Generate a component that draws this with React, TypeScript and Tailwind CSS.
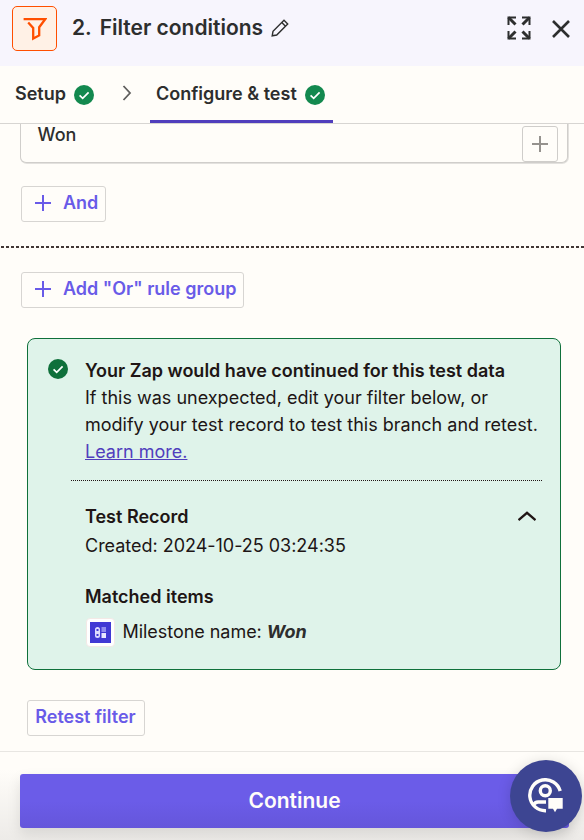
import React, { useState } from "react";

const TABS = [
  { id: "setup", label: "Setup" },
  { id: "configure", label: "Configure & test" },
];

function CheckBadge({ className }: { className: string }) {
  return (
    <svg viewBox="0 0 20 20" className={`w-5 h-5 shrink-0 ${className}`}>
      <circle cx="10" cy="10" r="10" fill="currentColor" />
      <path d="M5.6 10.3 8.7 13.4 14.6 7.3" fill="none" stroke="#fff" strokeWidth="1.7" />
    </svg>
  );
}

function PlusIcon({ className = "" }: { className?: string }) {
  return (
    <svg viewBox="0 0 16 16" className={`w-4 h-4 shrink-0 ${className}`} stroke="currentColor" strokeWidth="2">
      <path d="M8 0v16M0 8h16" />
    </svg>
  );
}

function FilterLogo() {
  return (
    <div className="flex items-center justify-center w-[45px] h-[45px] rounded-[5px] border border-[#ff4f00] bg-[#fff1e6]">
      <svg viewBox="0 0 24 24" className="w-6 h-6" fill="none" stroke="#ff4f00" strokeWidth="2.3">
        <path d="M.6 2.200H22.200L16.200 10.200v8.200L10.200 21.600V11L5.200 5.400" />
      </svg>
    </div>
  );
}

function ExpandIcon() {
  return (
    <svg viewBox="0 0 24 24" className="w-6 h-6" fill="none" stroke="#2d2e2e" strokeWidth="2">
      <path d="M1.500 9V1.500H9M15 1.500h7.500V9M22.500 15v7.500H15M9 22.500H1.500V15" />
      <path d="m1.500 1.500 7 7M22.500 1.500l-7 7M22.500 22.500l-7-7M1.500 22.500l7-7" strokeWidth="3" />
    </svg>
  );
}

export default function App() {
  const [open, setOpen] = useState(true);

  return (
    <div className="relative flex flex-col w-[584px] h-[840px] overflow-hidden bg-[#fffdf9] font-['Inter',sans-serif] text-[18px] leading-[27px] text-[#2d2e2e] whitespace-nowrap">
      {/* Header */}
      <header className="flex items-start h-[66px] shrink-0 bg-[#f7f5fd] pl-3 pt-1.5">
        <FilterLogo />
        <h1 className="ml-[15px] mt-[6px] text-[21px] leading-8 font-semibold">
          2. <span className="ml-[3px]">Filter conditions</span>
        </h1>
        <svg viewBox="0 0 18 18" className="w-[18px] h-[18px] ml-2 mt-[13px]" fill="none" stroke="#2d2e2e" strokeWidth="1.4">
          <path d="M1.200 16.800 2 12.300 13 1.300l3.700 3.700-11 11zM10.800 3.500l3.700 3.700" />
        </svg>
        <button className="ml-auto mt-[10px]">
          <ExpandIcon />
        </button>
        <button className="ml-[21px] mr-[14px] mt-[14px]">
          <svg viewBox="0 0 18 18" className="w-[18px] h-[18px]" stroke="#2d2e2e" strokeWidth="2.6">
            <path d="m1 1 16 16M17 1 1 17" />
          </svg>
        </button>
      </header>

      {/* Step tabs */}
      <nav className="flex h-[58px] shrink-0 border-b border-[#d7d5d2] pl-[15px] font-semibold">
        <button className="flex items-center gap-2 h-[57px]">
          <span className="pb-0.5">{TABS[0].label}</span>
          <CheckBadge className="text-[#13894f]" />
        </button>
        <svg viewBox="0 0 10 16" className="w-[10px] h-4 ml-7 mt-[19px]" fill="none" stroke="#5f5e5d" strokeWidth="1.8">
          <path d="m1.500 1 6.500 7-6.500 7" />
        </svg>
        <button className="flex items-center gap-2 h-[57px] w-[183px] ml-[18px] pl-1.5 border-b-[3px] border-[#503ebd]">
          <span>{TABS[1].label}</span>
          <CheckBadge className="mt-[3px] text-[#13894f]" />
        </button>
      </nav>

      {/* Filter rules */}
      <section className="flex flex-col items-start shrink-0">
        <div className="w-[549px] h-10 ml-[19.5px] pb-px pl-px pr-px bg-[#e3e1de] rounded-b-[7px]">
          <div className="flex justify-between h-[39px] -ml-px pl-[17px] pr-[9px] border border-t-0 border-[#d0cecb] rounded-b-md bg-[#fffdf9] font-medium">
            <span className="-mt-[3px]">Won</span>
            <button className="flex items-center justify-center w-9 h-9 mt-0.5 border border-[#cfcdca] rounded-[3px] text-[#95928e]">
              <PlusIcon />
            </button>
          </div>
        </div>
        <button className="flex items-center gap-3 h-9 w-[85px] ml-[21px] mt-[22px] pl-[13px] pb-px border border-[#d7d5d2] rounded-[3px] font-semibold text-[#695be8]">
          <PlusIcon className="-mt-px" />
          <span className="pb-0.5">And</span>
        </button>
        <div className="w-full h-0.5 mt-6 bg-[repeating-linear-gradient(90deg,transparent_0_1px,#413735_1px_4px,transparent_4px_5px)]" />
        <button className="flex items-center gap-3 h-9 w-[223px] ml-[21px] mt-6 pl-[13px] pb-px border border-[#d7d5d2] rounded-[3px] font-semibold text-[#695be8]">
          <PlusIcon className="-mt-px" />
          <span className="pb-0.5">Add "Or" rule group</span>
        </button>
      </section>

      {/* Test result */}
      <section className="flex shrink-0 w-[534px] h-[332px] ml-[27px] mt-[30px] pl-5 pt-[18px] border border-[#0f703b] rounded-lg bg-[#dff3ea] text-[#201515]">
        <CheckBadge className="mt-0.5 text-[#0f703b]" />
        <div className="flex flex-col ml-[3px] w-[471px]">
          <div className="pl-3.5">
            <p className="font-semibold">Your Zap would have continued for this test data</p>
            <p>If this was unexpected, edit your filter below, or</p>
            <p>modify your test record to test this branch and retest.</p>
            <a className="text-[#503ebd] underline">Learn more.</a>
          </div>
          <div className="h-px mt-[15px] bg-[repeating-linear-gradient(90deg,#201515_0_1px,transparent_1px_2px)]" />
          <button className="flex justify-between pl-3.5 pr-1.5 mt-[22px] font-semibold" onClick={() => setOpen(!open)}>
            Test Record
            <svg viewBox="0 0 18 10" className="w-[18px] h-[10px] mt-2" fill="none" stroke="#201515" strokeWidth="2.3">
              <path d="M.500 9 9 1.800 17.500 9" />
            </svg>
          </button>
          {open && (
            <div className="pl-3.5">
              <p className="mt-0.5 tracking-[-0.02px]">Created: 2024-10-25 03:24:35</p>
              <p className="mt-6 font-semibold">Matched items</p>
              <div className="flex items-center mt-2">
                <div className="flex items-center justify-center w-[29px] h-[29px] ml-[0.5px] rounded-[4px] border border-[#f3e9e6] bg-white">
                  <svg viewBox="0 0 21 21" className="w-[21px] h-[21px] shrink-0">
                    <path fill="#4039d4" d="M0 0h21v21H0z" />
                    <rect x="5" y="5" width="5" height="11" rx="2.5" fill="#dddcff" />
                    <path fill="#4039d4" d="M6.500 7h2v2h-2zM6.500 12h2v2h-2z" />
                    <path fill="#918dee" d="M11.500 5h4.500v5h-4.500z" />
                    <path fill="#e8e7ff" d="M11.500 11h4.500v5h-4.500z" />
                  </svg>
                </div>
                <p className="ml-2 pb-0.5 tracking-[-0.04px]">
                  Milestone name: <em className="font-bold text-[#2d2e2e]">Won</em>
                </p>
              </div>
            </div>
          )}
        </div>
      </section>

      <button className="shrink-0 w-[118px] h-9 ml-[27px] mt-[30px] pb-[3px] pr-px border border-[#d7d5d2] rounded-[3px] font-semibold text-[#695be8]">
        Retest filter
      </button>

      {/* Footer */}
      <footer className="shrink-0 h-[89px] mt-[15px] pt-[22px] pl-5 border-t border-[#e8e6e2] bg-linear-to-b from-[#fffdf9] from-20% to-[#edebe8]">
        <button className="w-[549px] h-[54px] pb-0.5 rounded-[3px] bg-linear-to-b from-[#6b5ce8] from-50% to-[#6556db] shadow-[0_6px_14px_rgba(0,0,0,0.1)] text-[21px] font-semibold text-[#fffdf9]">
          Continue
        </button>
      </footer>

      {/* Support bubble */}
      <button className="absolute left-[510px] top-[760px] w-[72px] h-[72px] rounded-full bg-[#3d4592] shadow-[0_2px_14px_rgba(0,0,0,0.15)] flex items-center justify-center">
        <svg viewBox="0 0 36 36" className="w-9 h-9" fill="none" stroke="#fffdf9" strokeWidth="3.4">
          <path d="M32.200 13A15.500 15.500 0 1 0 18 32.700" />
          <circle cx="17.300" cy="12.700" r="5" />
          <path d="M5 27.500Q7 24 10 24h8" />
          <path d="M20.300 20h14.400v10.700H29L27 34.200l-2-3.500h-4.700z" fill="#fffdf9" stroke="none" />
        </svg>
      </button>
    </div>
  );
}
